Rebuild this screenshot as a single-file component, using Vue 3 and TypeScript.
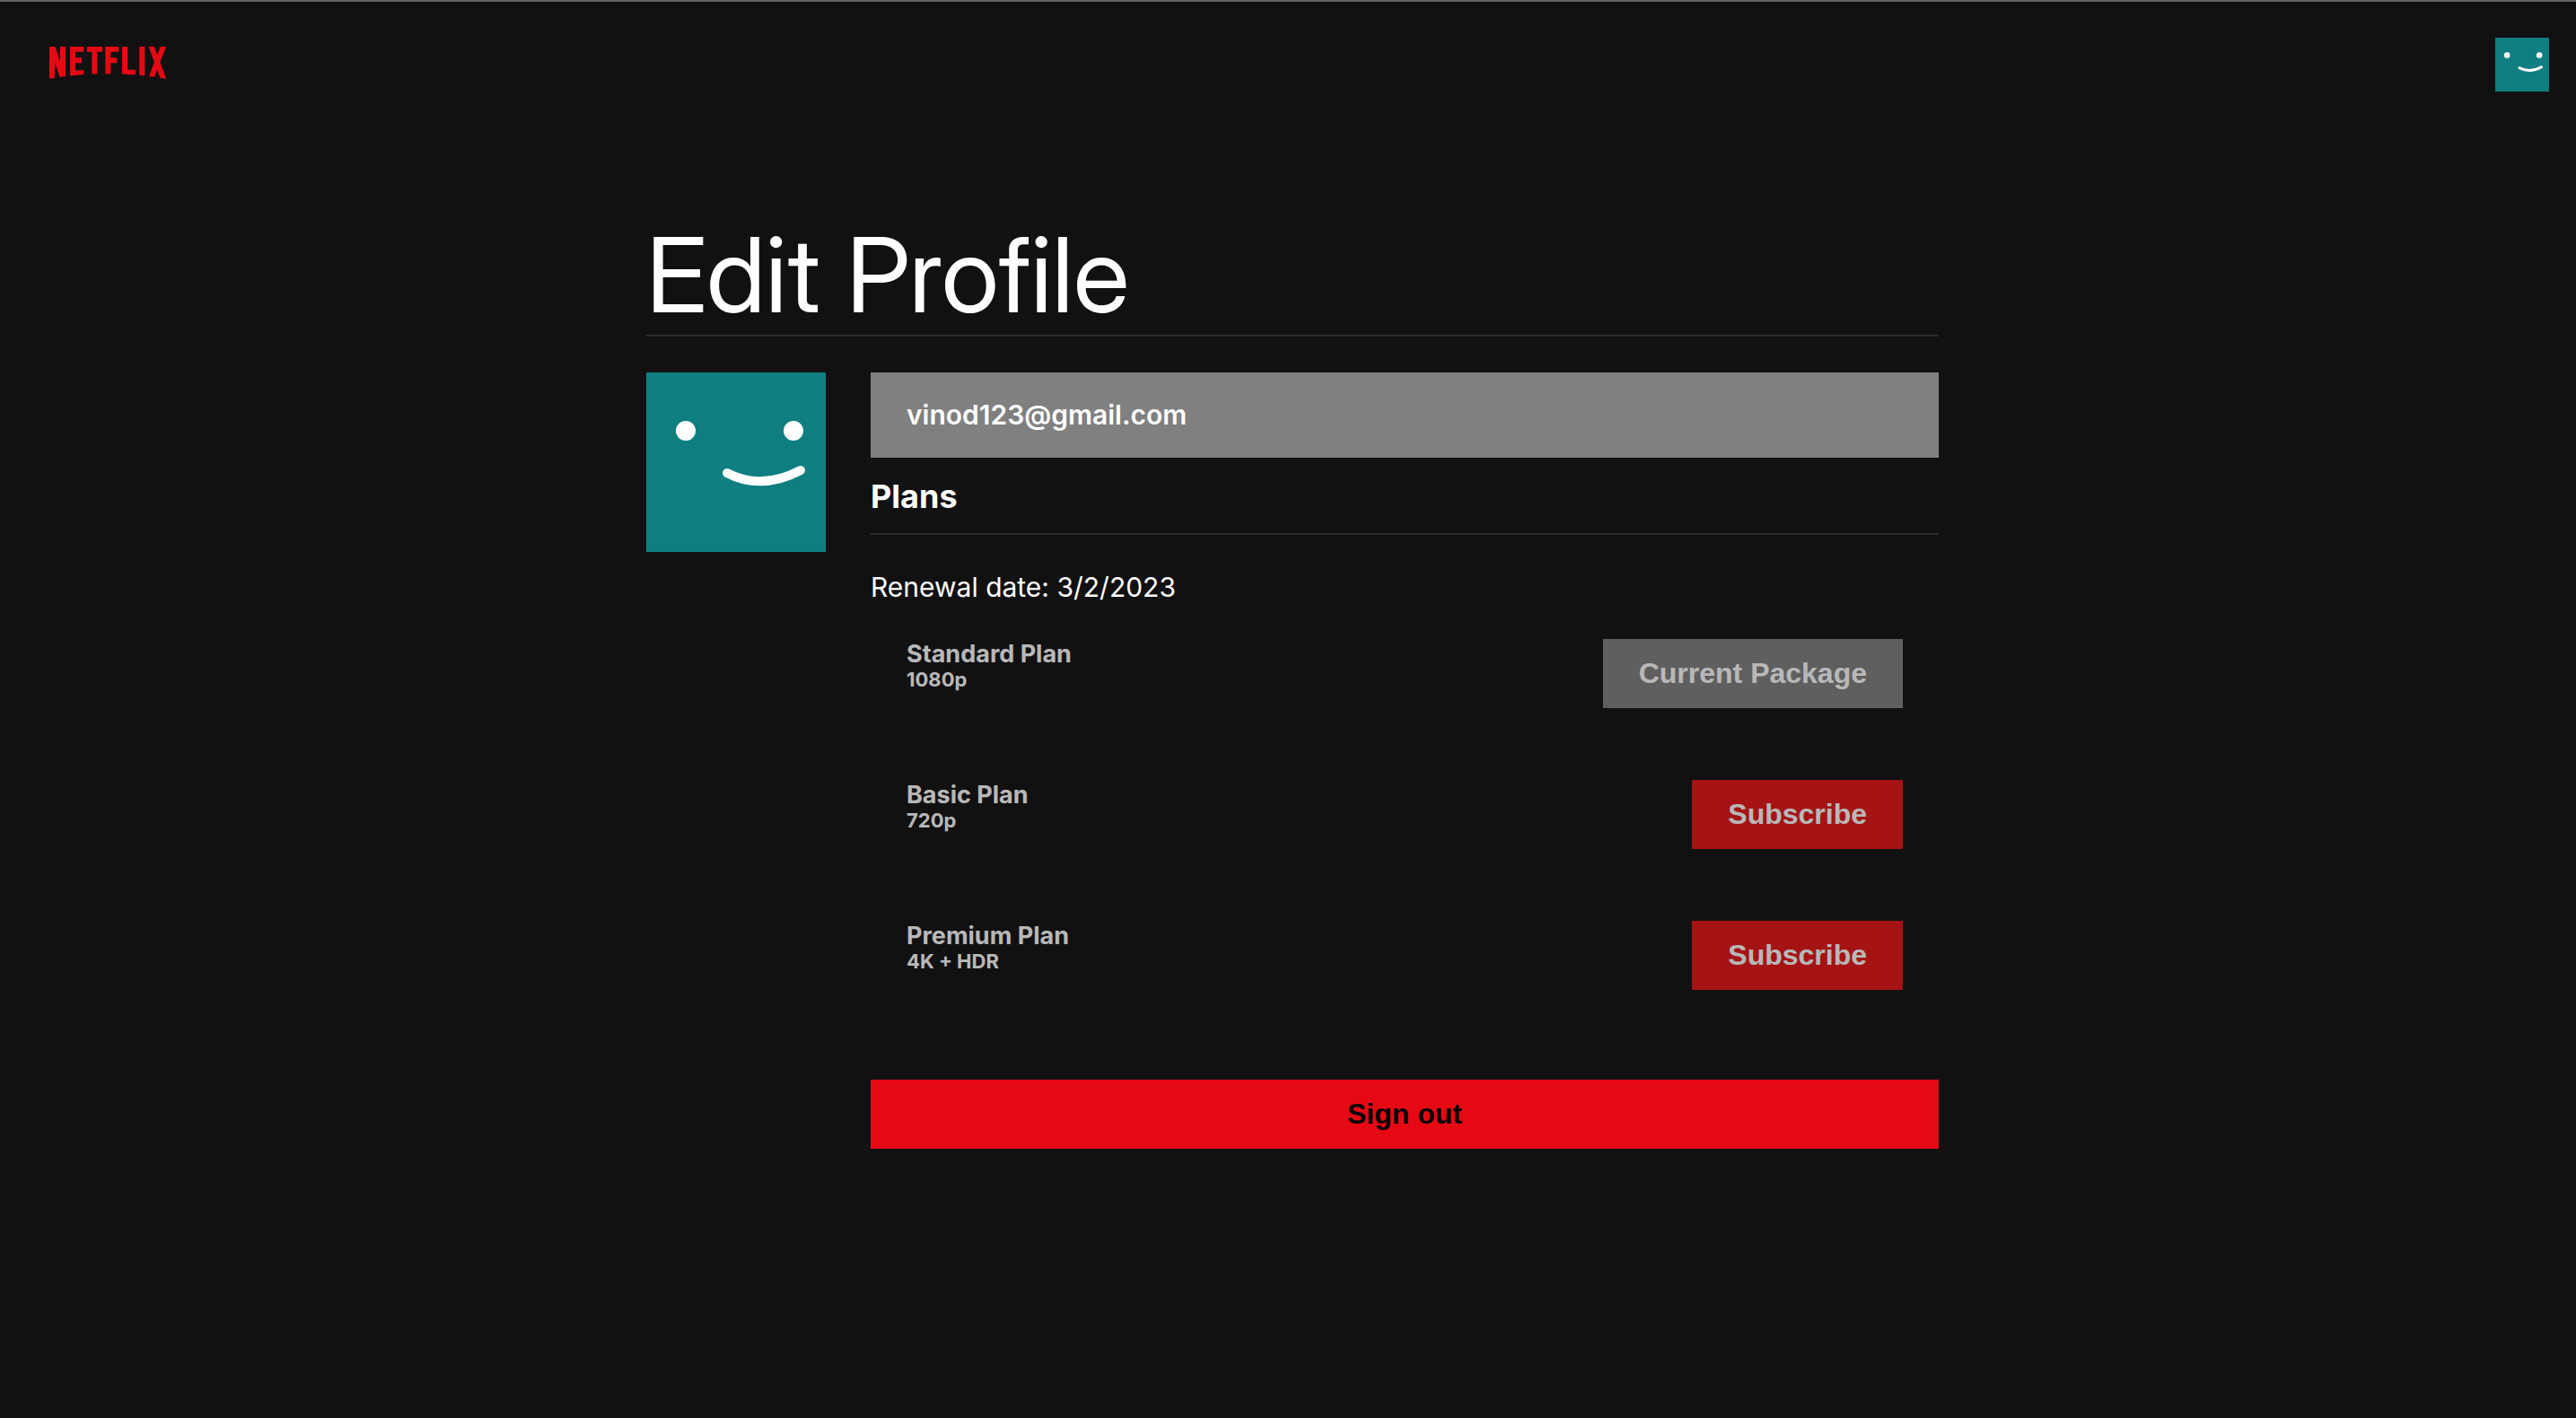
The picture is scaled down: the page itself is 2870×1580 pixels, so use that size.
<script setup lang="ts">
interface Plan {
  name: string
  quality: string
  current: boolean
}

const email = 'vinod123@gmail.com'
const renewalDate = '3/2/2023'
const plans: Plan[] = [
  { name: 'Standard Plan', quality: '1080p', current: true },
  { name: 'Basic Plan', quality: '720p', current: false },
  { name: 'Premium Plan', quality: '4K + HDR', current: false },
]
</script>

<template>
  <div class="page">
    <header class="nav">
      <a class="nav-logo" href="#" aria-label="Netflix">
        <svg viewBox="0 0 390 108" aria-hidden="true">
          <defs>
            <clipPath id="logo-arch">
              <path d="M0 0H390V107Q195 75 0 107Z" />
            </clipPath>
          </defs>
          <g clip-path="url(#logo-arch)" fill="none" stroke="#e50914" stroke-width="18">
            <path d="M9 0V108M45 0V108M8 -6L46 107" />
            <path d="M78 0V108M78 8H115M78 46H108M78 89L115 87" />
            <path d="M126 8H177M151 0V108" />
            <path d="M196 0V108M196 8H232M196 46H226" />
            <path d="M252 0V108M252 85L288 87" />
            <path d="M310 0V108" />
            <path d="M339 -6L383 113M383 -6L337 113" />
          </g>
        </svg>
      </a>
      <button class="nav-avatar" type="button" aria-label="Profile">
        <svg viewBox="0 0 200 200" aria-hidden="true">
          <rect width="200" height="200" fill="#0f7e80" />
          <circle cx="44" cy="65" r="11" fill="#fff" />
          <circle cx="164" cy="65" r="11" fill="#fff" />
          <path d="M90 112Q128 132 172 109" fill="none" stroke="#fff" stroke-width="10" stroke-linecap="round" />
        </svg>
      </button>
    </header>

    <main class="profile">
      <h1>Edit Profile</h1>
      <div class="info">
        <svg class="avatar" viewBox="0 0 200 200" role="img" aria-label="Avatar">
          <rect width="200" height="200" fill="#0f7e80" />
          <circle cx="44" cy="65" r="11" fill="#fff" />
          <circle cx="164" cy="65" r="11" fill="#fff" />
          <path d="M90 112Q128 132 172 109" fill="none" stroke="#fff" stroke-width="10" stroke-linecap="round" />
        </svg>
        <div class="details">
          <h2>{{ email }}</h2>
          <h3>Plans</h3>
          <p class="renewal">Renewal date: {{ renewalDate }}</p>
          <ul class="plans">
            <li v-for="plan in plans" :key="plan.name" class="plan">
              <div>
                <h4>{{ plan.name }}</h4>
                <p class="quality">{{ plan.quality }}</p>
              </div>
              <button type="button" :class="['subscribe', { current: plan.current }]">
                {{ plan.current ? 'Current Package' : 'Subscribe' }}
              </button>
            </li>
          </ul>
          <button class="sign-out" type="button">Sign out</button>
        </div>
      </div>
    </main>
  </div>
</template>

<style>
body {
  margin: 0;
  background: #111;
}
</style>

<style scoped>
.page {
  box-sizing: border-box;
  min-height: 100vh;
  border-top: 2px solid #616167;
  background: #111;
  color: #fff;
  font-family: Inter, "Liberation Sans", sans-serif;
}

h1,
h2,
h3,
h4,
p,
ul {
  margin: 0;
  padding: 0;
}

button {
  border: 0;
  padding: 0;
  cursor: pointer;
}

svg {
  display: block;
}

.nav {
  display: flex;
  justify-content: space-between;
  align-items: flex-start;
  padding: 40px 30px 0 55px;
}

.nav-logo {
  padding-top: 10px;
}

.nav-logo svg {
  width: 130px;
  height: 36px;
}

.nav-avatar svg {
  width: 60px;
  height: 60px;
}

.profile {
  max-width: 1440px;
  margin: 0 auto;
  padding: 137px 0 40px 10px;
}

h1 {
  border-bottom: 2px solid #282c2d;
  font-family: "Inter Display", Inter, "Liberation Sans", sans-serif;
  font-size: 116px;
  font-weight: 400;
  line-height: 134px;
}

.info {
  display: flex;
  align-items: flex-start;
  gap: 50px;
  margin-top: 40px;
}

.avatar {
  flex: none;
  width: 200px;
  height: 200px;
}

.details {
  flex: 1;
}

h2 {
  padding: 30px 40px;
  background: #808080;
  font-size: 30px;
  font-weight: 600;
  line-height: 35px;
}

h3 {
  margin-top: 20px;
  padding-bottom: 18px;
  border-bottom: 2px solid #282c2d;
  font-size: 36px;
  font-weight: 700;
  line-height: 46px;
}

.renewal {
  margin-top: 40px;
  font-size: 30px;
  line-height: 36px;
}

.plans {
  display: flex;
  flex-direction: column;
  gap: 80px;
  margin-top: 40px;
  padding: 0 40px;
  list-style: none;
}

.plan {
  display: flex;
  justify-content: space-between;
  align-items: flex-start;
  opacity: 0.7;
}

h4 {
  font-size: 27px;
  font-weight: 700;
  line-height: 33px;
}

.quality {
  font-size: 22px;
  font-weight: 700;
  line-height: 25px;
}

.subscribe,
.sign-out {
  padding: 20px 40px;
  background: #e50914;
  font-family: "Liberation Sans", Arial, sans-serif;
  font-size: 32px;
  font-weight: 700;
  line-height: 37px;
}

.subscribe {
  background: #e41517;
  color: #fff;
}

.subscribe.current {
  background: #808080;
}

.sign-out {
  width: 100%;
  margin-top: 100px;
  color: #000;
}
</style>
